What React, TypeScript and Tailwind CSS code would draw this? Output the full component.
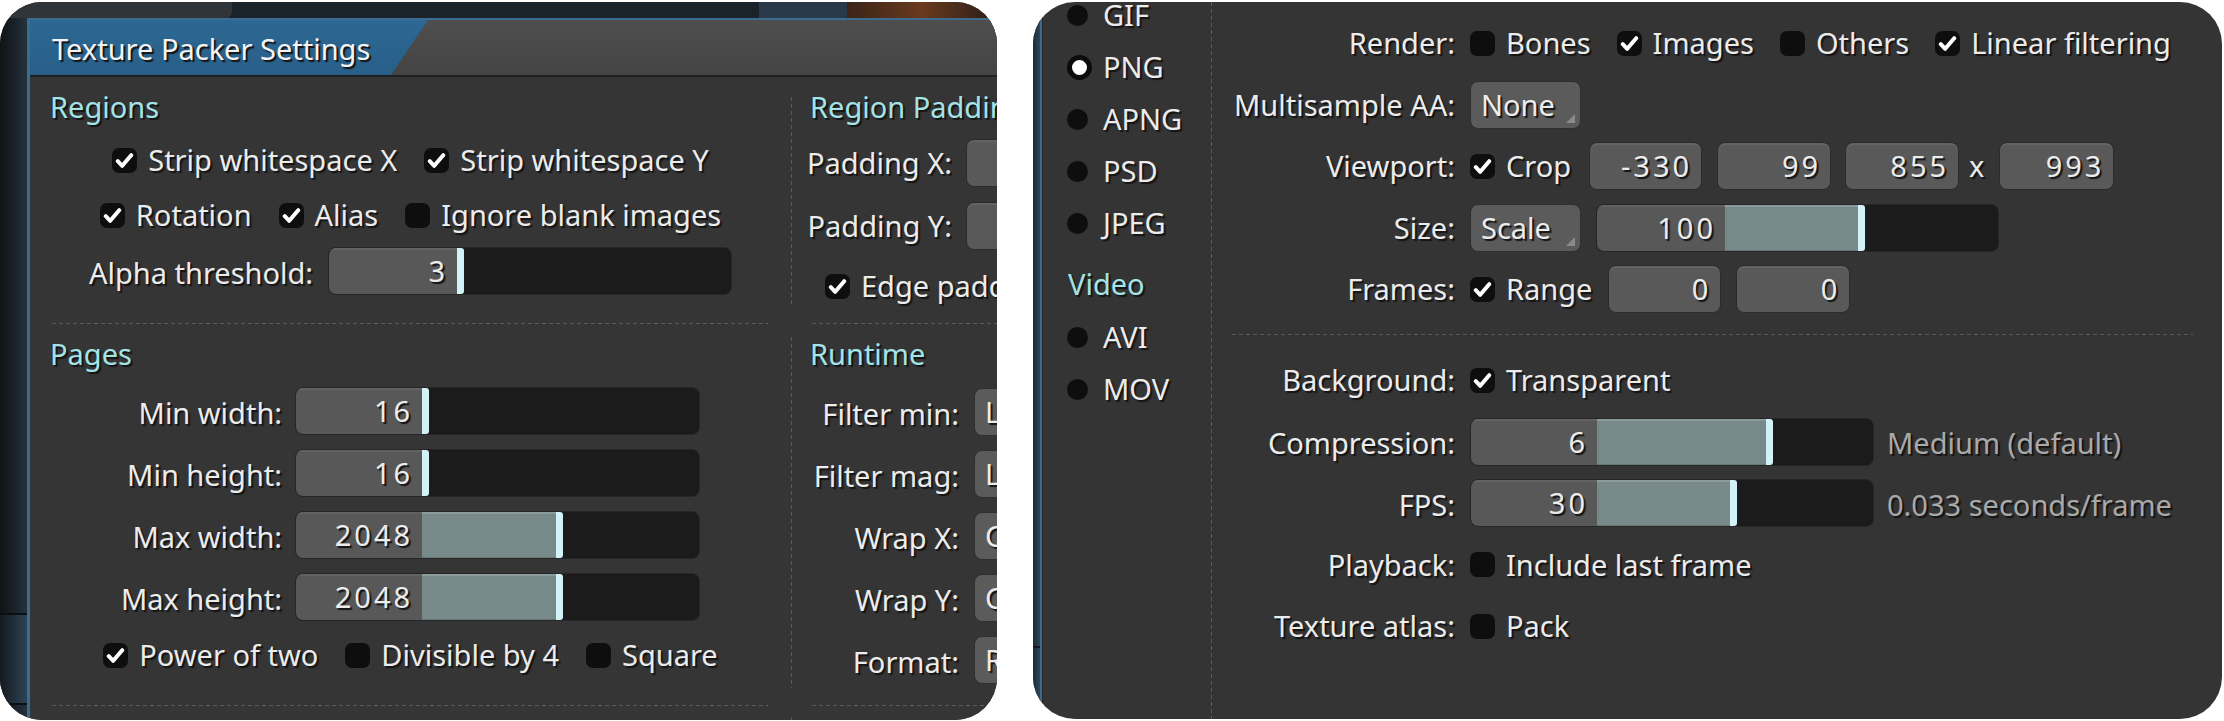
import React from "react";

// Two export dialogs shown side by side: the texture packer window and the image/video export form.

function Check({ on }: { on?: boolean }) {
  return (
    <span className="flex h-[25px] w-[25px] shrink-0 items-center justify-center rounded-[7px] bg-[#0e0e0e]">
      {on && (
        <svg width="19" height="17" viewBox="0 0 19 17">
          <path
            d="M2.8 9.2 L7.2 13.8 L16.2 3.2"
            fill="none"
            stroke="#ffffff"
            strokeWidth="4"
            strokeLinecap="round"
            strokeLinejoin="round"
          />
        </svg>
      )}
    </span>
  );
}

function CheckItem({ on, label }: { on?: boolean; label: string }) {
  return (
    <span className="flex items-center gap-[11px] whitespace-nowrap">
      <Check on={on} />
      <span>{label}</span>
    </span>
  );
}

function Radio({ on, label }: { on?: boolean; label: string }) {
  return (
    <div className="flex h-[52px] items-center gap-[11px] pl-[24px]">
      <span className="flex w-[25px] items-center">
        {on ? (
          <span className="h-[25px] w-[25px] rounded-full border-[5px] border-[#0b0b0b] bg-white" />
        ) : (
          <span className="h-[21px] w-[21px] rounded-full bg-[#0e0e0e]" />
        )}
      </span>
      <span>{label}</span>
    </div>
  );
}

function NumBox({ value, className }: { value: string; className: string }) {
  return (
    <span
      className={`flex h-[48px] items-center justify-end rounded-[8px] border border-[#2b2b2b] bg-[#595959] pr-[9px] tracking-[3px] shadow-[inset_0_2px_0_#636363] ${className}`}
    >
      {value}
    </span>
  );
}

function Select({ value, className }: { value: string; className: string }) {
  return (
    <span
      className={`relative flex h-[48px] items-center overflow-hidden whitespace-nowrap rounded-[8px] border border-[#2f2f2f] bg-[#5b5b5b] pl-[10px] ${className}`}
    >
      {value}
      <span className="absolute bottom-[5px] right-[5px] h-0 w-0 border-b-[9px] border-l-[9px] border-b-[#8b8b8b] border-l-transparent" />
    </span>
  );
}

function Slider({
  value,
  fill,
  width = 404,
  numWidth = 126,
}: {
  value: string;
  fill: number;
  width?: number;
  numWidth?: number;
}) {
  return (
    <div
      className="flex h-[48px] shrink-0 overflow-hidden rounded-[8px] border border-[#262626] bg-[#1b1b1b]"
      style={{ width }}
    >
      <div
        className="flex h-full items-center justify-end bg-[#585858] pr-[9px] tracking-[3px] shadow-[inset_0_2px_0_#626262]"
        style={{ width: numWidth }}
      >
        {value}
      </div>
      <div
        className="h-full border-t-2 border-b border-t-[#8c9c9c] border-b-[#667676] bg-[#788989]"
        style={{ width: fill }}
      />
      <div className="h-full w-[7px] rounded-r-[3px] bg-[#d3f2f8]" />
    </div>
  );
}

function Heading({ children, className = "" }: { children: React.ReactNode; className?: string }) {
  return (
    <div className={`h-[40px] whitespace-nowrap leading-[40px] text-[#a4e4e7] ${className}`}>{children}</div>
  );
}

const HDash = "h-px bg-[repeating-linear-gradient(90deg,#5a5a5a_0_4px,transparent_4px_7px)]";

function VDash({ className }: { className: string }) {
  return (
    <div
      className={`w-px shrink-0 bg-[repeating-linear-gradient(180deg,#5a5a5a_0_4px,transparent_4px_7px)] ${className}`}
    />
  );
}

function PackerWindow() {
  const pages: [string, string, number][] = [
    ["Min width:", "16", 0],
    ["Min height:", "16", 0],
    ["Max width:", "2048", 134],
    ["Max height:", "2048", 134],
  ];
  const runtime: [string, string][] = [
    ["Filter min:", "Linear"],
    ["Filter mag:", "Linear"],
    ["Wrap X:", "ClampToEdge"],
    ["Wrap Y:", "ClampToEdge"],
    ["Format:", "RGBA8888"],
  ];

  return (
    <div className="mt-[2px] flex h-[718px] w-[997px] shrink-0 flex-col overflow-hidden rounded-[42px] bg-[#1a2026]">
      {/* strip of the editor window behind the dialog */}
      <div className="flex h-[16px] shrink-0">
        <div className="w-[232px] rounded-br-[6px] bg-[#30353a]" />
        <div className="flex-1 bg-[#1b232a]" />
        <div className="w-[88px] bg-[#29394a]" />
        <div className="w-[150px] bg-gradient-to-r from-[#3b2417] via-[#6a3a1e] to-[#2b1d16]" />
      </div>

      <div className="flex min-h-0 flex-1">
        <div className="flex w-[27px] shrink-0 flex-col bg-gradient-to-r from-[#0f1316] to-[#24313c]">
          <div className="h-[595px]" />
          <div className="h-[2px] bg-[#0c0f12]" />
          <div className="h-[88px] bg-gradient-to-r from-[#151b20] to-[#2c4356]" />
          <div className="h-[2px] bg-[#0c0f12]" />
        </div>

        <div className="flex min-w-0 flex-1 flex-col border-l-[3px] border-t-2 border-[#3a6b90] bg-[#353535]">
          {/* title bar */}
          <div className="flex h-[55px] shrink-0 bg-gradient-to-b from-[#4e4e4e] to-[#444444]">
            <div className="flex w-[398px] items-center bg-gradient-to-b from-[#2c6893] to-[#285f89] pl-[22px] pt-[2px] text-[#f4f4f4] [clip-path:polygon(0_0,100%_0,calc(100%-37px)_100%,0_100%)]">
              Texture Packer Settings
            </div>
          </div>
          <div className="h-[2px] shrink-0 bg-[#1f1f1f]" />

          {/* regions / region padding */}
          <div className="flex h-[246px] shrink-0">
            <div className="flex w-[761px] shrink-0 flex-col items-center">
              <Heading className="mt-[10px] self-start pl-[20px]">Regions</Heading>
              <div className="mt-[13px] flex h-[40px] items-center gap-[27px]">
                <CheckItem on label="Strip whitespace X" />
                <CheckItem on label="Strip whitespace Y" />
              </div>
              <div className="mt-[15px] flex h-[40px] items-center gap-[27px]">
                <CheckItem on label="Rotation" />
                <CheckItem on label="Alias" />
                <CheckItem label="Ignore blank images" />
              </div>
              <div className="mt-[12px] flex h-[48px] items-center gap-[15px]">
                <span className="pt-[3px]">Alpha threshold:</span>
                <Slider value="3" fill={0} width={404} numWidth={128} />
              </div>
            </div>
            <VDash className="mb-[16px] mt-[20px]" />
            <div className="flex min-w-0 flex-1 flex-col overflow-hidden">
              <Heading className="mt-[10px] pl-[18px]">Region Padding</Heading>
              <div className="mt-[12px] grid grid-cols-[160px_120px] gap-x-[14px] gap-y-[15px]">
                <span className="flex h-[48px] items-center justify-end whitespace-nowrap">Padding X:</span>
                <NumBox value="" className="w-[120px]" />
                <span className="flex h-[48px] items-center justify-end whitespace-nowrap">Padding Y:</span>
                <NumBox value="" className="w-[120px]" />
              </div>
              <div className="mt-[16px] flex h-[40px] items-center pl-[33px]">
                <CheckItem on label="Edge padding" />
              </div>
            </div>
          </div>

          <div className="flex shrink-0">
            <div className={`ml-[22px] w-[716px] ${HDash}`} />
            <div className={`ml-[44px] flex-1 ${HDash}`} />
          </div>

          {/* pages / runtime */}
          <div className="flex h-[381px] shrink-0">
            <div className="flex w-[761px] shrink-0 flex-col items-center">
              <Heading className="mt-[10px] self-start pl-[20px]">Pages</Heading>
              <div className="mt-[13px] grid grid-cols-[auto_auto] gap-x-[13px] gap-y-[14px]">
                {pages.map(([label, value, fill]) => (
                  <React.Fragment key={label}>
                    <span className="flex h-[48px] items-center justify-end whitespace-nowrap pt-[3px]">{label}</span>
                    <Slider value={value} fill={fill} width={405} numWidth={126} />
                  </React.Fragment>
                ))}
              </div>
              <div className="mt-[14px] flex h-[40px] items-center gap-[27px]">
                <CheckItem on label="Power of two" />
                <CheckItem label="Divisible by 4" />
                <CheckItem label="Square" />
              </div>
            </div>
            <VDash className="mb-[17px] mt-[13px]" />
            <div className="flex min-w-0 flex-1 flex-col overflow-hidden">
              <Heading className="mt-[10px] pl-[18px]">Runtime</Heading>
              <div className="mt-[14px] grid grid-cols-[167px_160px] gap-x-[15px] gap-y-[14px]">
                {runtime.map(([label, value]) => (
                  <React.Fragment key={label}>
                    <span className="flex h-[48px] items-center justify-end whitespace-nowrap pt-[3px]">{label}</span>
                    <Select value={value} className="w-[160px]" />
                  </React.Fragment>
                ))}
              </div>
            </div>
          </div>

          <div className="flex shrink-0">
            <div className={`ml-[22px] w-[716px] ${HDash}`} />
            <div className={`ml-[44px] flex-1 ${HDash}`} />
          </div>

          <div className="flex flex-1">
            <div className="w-[761px] shrink-0" />
            <VDash className="mt-[11px]" />
          </div>
        </div>
      </div>
    </div>
  );
}

function ExportWindow() {
  return (
    <div className="mt-[2px] flex h-[717px] w-[1189px] shrink-0 overflow-hidden rounded-[42px] bg-[#343434]">
      <div className="flex w-[7px] shrink-0 flex-col bg-gradient-to-r from-[#1d2b36] to-[#2c465b]">
        <div className="h-[644px]" />
        <div className="h-[2px] bg-[#111820]" />
      </div>
      <div className="w-[2px] shrink-0 bg-[#3d6a8d]" />
      <div className="w-px shrink-0 bg-[#262626]" />

      {/* output formats */}
      <div className="flex w-[168px] shrink-0 flex-col">
        <div className="mt-[-13px]">
          <Radio label="GIF" />
          <Radio on label="PNG" />
          <Radio label="APNG" />
          <Radio label="PSD" />
          <Radio label="JPEG" />
        </div>
        <Heading className="mt-[15px] pl-[25px] text-[#98e2e9]">Video</Heading>
        <div className="mt-[7px]">
          <Radio label="AVI" />
          <Radio label="MOV" />
        </div>
      </div>

      <VDash className="h-full" />

      {/* export options */}
      <div className="flex min-w-0 flex-1 flex-col pt-[17px]">
        <div className="grid grid-cols-[243px_auto] gap-x-[15px] gap-y-[13.5px]">
          <span className="flex h-[48px] items-center justify-end">Render:</span>
          <div className="flex h-[48px] items-center gap-[26px]">
            <CheckItem label="Bones" />
            <CheckItem on label="Images" />
            <CheckItem label="Others" />
            <CheckItem on label="Linear filtering" />
          </div>

          <span className="flex h-[48px] items-center justify-end">Multisample AA:</span>
          <div className="flex h-[48px] items-center">
            <Select value="None" className="w-[111px]" />
          </div>

          <span className="flex h-[48px] items-center justify-end">Viewport:</span>
          <div className="flex h-[48px] items-center">
            <CheckItem on label="Crop" />
            <NumBox value="-330" className="ml-[18px] w-[113px]" />
            <NumBox value="99" className="ml-[15px] w-[114px]" />
            <NumBox value="855" className="ml-[14px] w-[114px]" />
            <span className="ml-[10px] mr-[15px]">x</span>
            <NumBox value="993" className="w-[115px]" />
          </div>

          <span className="flex h-[48px] items-center justify-end">Size:</span>
          <div className="flex h-[48px] items-center gap-[15px]">
            <Select value="Scale" className="w-[111px]" />
            <Slider value="100" fill={133} width={403} numWidth={128} />
          </div>

          <span className="flex h-[48px] items-center justify-end">Frames:</span>
          <div className="flex h-[48px] items-center">
            <CheckItem on label="Range" />
            <NumBox value="0" className="ml-[16px] w-[113px]" />
            <NumBox value="0" className="ml-[15px] w-[114px]" />
          </div>
        </div>

        <div className={`ml-[20px] mr-[29px] mt-[21px] ${HDash}`} />

        <div className="mt-[21px] grid grid-cols-[243px_auto] gap-x-[15px] gap-y-[13.5px]">
          <span className="flex h-[48px] items-center justify-end">Background:</span>
          <div className="flex h-[48px] items-center">
            <CheckItem on label="Transparent" />
          </div>

          <span className="flex h-[48px] items-center justify-end pt-[3px]">Compression:</span>
          <div className="flex h-[48px] items-center gap-[13px]">
            <Slider value="6" fill={169} width={404} numWidth={126} />
            <span className="pt-[3px] text-[#a9a9a9]">Medium (default)</span>
          </div>

          <span className="flex h-[48px] items-center justify-end pt-[3px]">FPS:</span>
          <div className="flex h-[48px] items-center gap-[13px]">
            <Slider value="30" fill={133} width={404} numWidth={126} />
            <span className="pt-[3px] text-[#a9a9a9]">0.033 seconds/frame</span>
          </div>

          <span className="flex h-[48px] items-center justify-end">Playback:</span>
          <div className="flex h-[48px] items-center">
            <CheckItem label="Include last frame" />
          </div>

          <span className="flex h-[48px] items-center justify-end">Texture atlas:</span>
          <div className="flex h-[48px] items-center">
            <CheckItem label="Pack" />
          </div>
        </div>
      </div>
    </div>
  );
}

export default function App() {
  return (
    <div className="flex h-[721px] w-[2224px] gap-[36px] overflow-hidden bg-white font-['Noto_Sans',sans-serif] text-[29px] text-[#ececec] [text-shadow:2px_2px_1px_#141414]">
      <PackerWindow />
      <ExportWindow />
    </div>
  );
}
